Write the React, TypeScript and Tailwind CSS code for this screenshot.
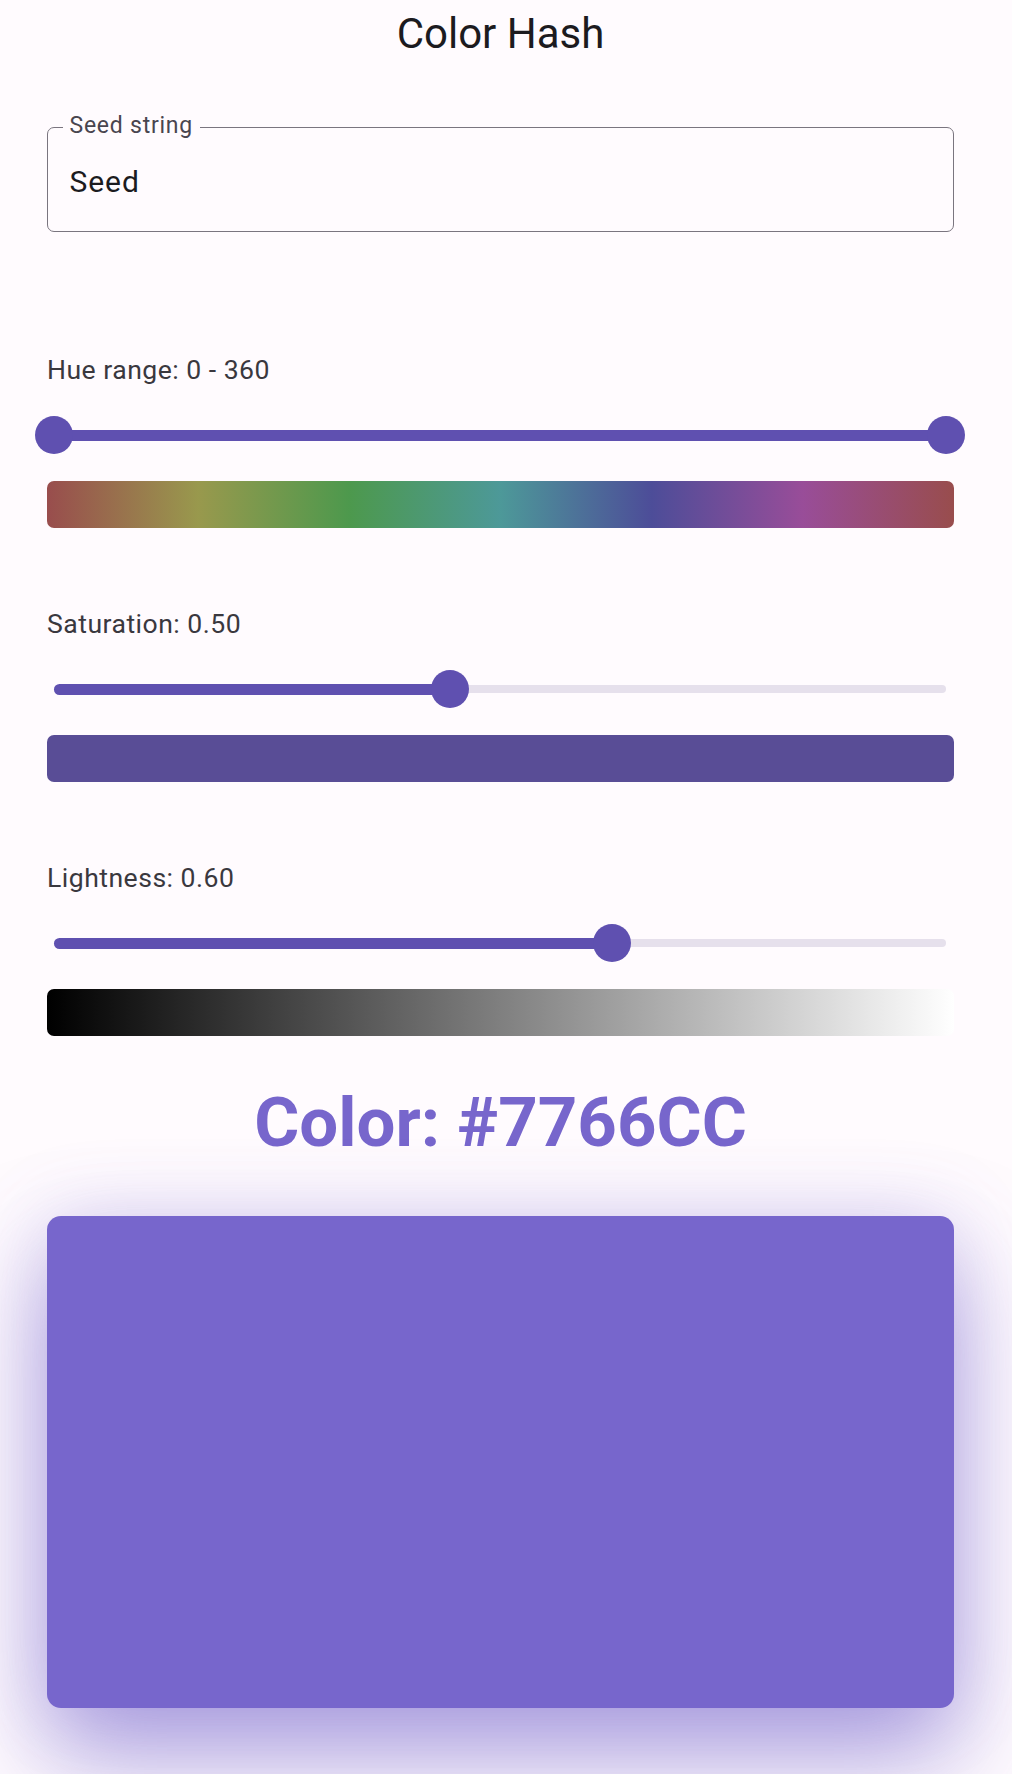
import { useState, type ReactNode } from 'react';

// seekbar with a round thumb; min/max are the slider bounds
function Slider({ value, min, max }: { value: number; min: number; max: number }) {
  const pct = ((value - min) / (max - min)) * 100;
  return (
    <div className="relative h-[38px] ml-[7px] mr-[8px] flex items-center">
      <div className="h-[8px] w-full rounded-full bg-[#e6e0ec]" />
      <div className="absolute left-0 top-[13.5px] h-[11px] rounded-full bg-[#5f50b0]" style={{ width: `${pct}%` }} />
      <div className="absolute top-0 w-[38px] h-[38px] rounded-full bg-[#5f50b0]" style={{ left: `calc(${pct}% - 19px)` }} />
    </div>
  );
}

function RangeSlider({ start, end }: { start: number; end: number }) {
  const a = (start / 360) * 100;
  const b = (end / 360) * 100;
  return (
    <div className="relative h-[38px] ml-[7px] mr-[8px] flex items-center">
      <div className="absolute top-[13.5px] h-[11px] bg-[#5f50b0]" style={{ left: `${a}%`, width: `${b - a}%` }} />
      <div className="absolute top-0 w-[38px] h-[38px] rounded-full bg-[#5f50b0]" style={{ left: `calc(${a}% - 19px)` }} />
      <div className="absolute top-0 w-[38px] h-[38px] rounded-full bg-[#5f50b0]" style={{ left: `calc(${b}% - 19px)` }} />
    </div>
  );
}

function Section({ label, slider, bar }: { label: string; slider: ReactNode; bar: string }) {
  return (
    <div className="flex flex-col gap-[26px]">
      <div className="text-[26.6px] leading-[40px] tracking-[0.475px] text-[#3a383e]">{label}</div>
      {slider}
      <div className={`mt-px h-[47px] rounded-[7px] ${bar}`} />
    </div>
  );
}

export default function App() {
  const [seed, setSeed] = useState('Seed');
  const saturation = 0.5;
  const lightness = 0.6;

  return (
    <div className="min-h-[1774px] bg-[#fffbfe] pl-[47px] pr-[58px] pt-[13px] flex flex-col font-['Roboto',sans-serif] overflow-hidden">
      <h1 className="text-[42px] leading-[42px] text-center text-[#1c1b1f]">Color Hash</h1>

      {/* seed input */}
      <div className="relative mt-[72px] h-[105px] border-[1.5px] border-[#7a757f] rounded-[7px] pl-[21.5px] pt-[38px]">
        <span className="absolute -top-[14px] left-[14.5px] px-[7px] bg-[#fffbfe] text-[23px] leading-[23px] tracking-[0.76px] text-[#49454f]">
          Seed string
        </span>
        <input
          value={seed}
          onChange={(e) => setSeed(e.target.value)}
          className="w-full bg-transparent outline-none text-[30px] leading-[30px] h-[30px] tracking-[0.95px] text-[#1c1b1f]"
        />
      </div>

      <div className="mt-[118px] flex flex-col gap-[76px]">
        <Section
          label="Hue range: 0 - 360"
          slider={<RangeSlider start={0} end={360} />}
          bar="bg-[linear-gradient(to_right,hsl(0_33%_45%),hsl(60_33%_45%),hsl(120_33%_45%),hsl(180_33%_45%),hsl(240_33%_45%),hsl(300_33%_45%),hsl(360_33%_45%))]"
        />
        <Section
          label={`Saturation: ${saturation.toFixed(2)}`}
          slider={<Slider value={saturation} min={0.1} max={1} />}
          bar="bg-[#594d96]"
        />
        <Section
          label={`Lightness: ${lightness.toFixed(2)}`}
          slider={<Slider value={lightness} min={0.1} max={0.9} />}
          bar="bg-[linear-gradient(to_right,#000000,#ffffff)]"
        />
      </div>

      <div className="mt-[52px] text-center text-[69px] leading-[70px] font-bold text-[#7766cc]">Color: #7766CC</div>

      <div className="mt-[58px] h-[492px] rounded-[14px] bg-[#7766cc] shadow-[0_50px_100px_rgba(119,102,204,0.6),0_0_80px_rgba(119,102,204,0.2)]" />
    </div>
  );
}
